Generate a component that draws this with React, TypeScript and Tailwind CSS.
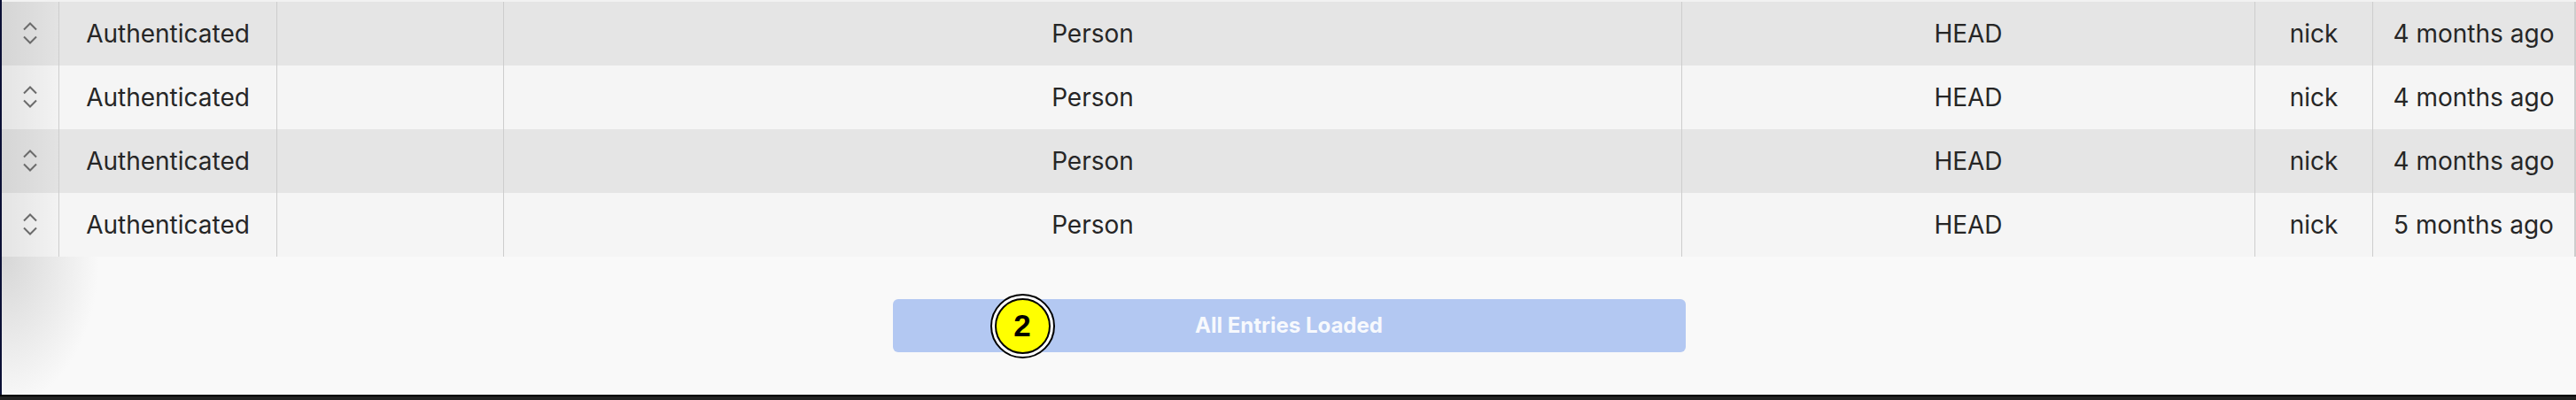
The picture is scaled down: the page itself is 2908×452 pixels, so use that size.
import React from "react"

const rows = [
  { role: "Authenticated", type: "Person", method: "HEAD", user: "nick", when: "4 months ago" },
  { role: "Authenticated", type: "Person", method: "HEAD", user: "nick", when: "4 months ago" },
  { role: "Authenticated", type: "Person", method: "HEAD", user: "nick", when: "4 months ago" },
  { role: "Authenticated", type: "Person", method: "HEAD", user: "nick", when: "5 months ago" },
]

const SortIcon = () => (
  <svg width="16" height="26" viewBox="0 0 16 26" fill="none" stroke="#6b6b6b" strokeWidth={2}>
    <path d="M1 8.5L8 1.5L15 8.5" />
    <path d="M1 16.5L8 23.5L15 16.5" />
  </svg>
)

const cell = "flex items-center justify-center border-r border-[#cdcdcd] overflow-hidden whitespace-nowrap"

const App = () => {
  return (
    <div className="flex h-[452px] w-[2908px] flex-col" style={{ fontFamily: "Inter, 'Liberation Sans', sans-serif" }}>
      <div className="flex h-[446px]">
        <div className="w-[2px] bg-[#0b1035]" />
        <div className="flex flex-1 flex-col">
          <div className="h-[2px] bg-[#f2f2f2]" />
          {rows.map((r, i) => (
            <div
              key={i}
              className={
                "grid h-[72px] grid-cols-[65px_246px_256px_1330px_647px_133px_1fr] text-[28px] text-[#262626] " +
                (i % 2 === 0 ? "bg-[#e5e5e5]" : "bg-[#f5f5f5]")
              }
            >
              <div className={cell + " bg-[linear-gradient(to_right,rgba(0,0,0,0.07),rgba(0,0,0,0.01))]"}>
                <SortIcon />
              </div>
              <div className={cell}>{r.role}</div>
              <div className={cell}></div>
              <div className={cell}>{r.type}</div>
              <div className={cell}>{r.method}</div>
              <div className={cell}>{r.user}</div>
              <div className={cell + " border-r-2"}>{r.when}</div>
            </div>
          ))}
          <div className="flex flex-1 justify-center bg-[#f9f9f9] bg-[radial-gradient(110px_170px_at_0_0,#d6d6d6,#f9f9f9)] pt-[48px]">
            <div className="relative">
              <button className="flex h-[60px] w-[895px] items-center justify-center rounded-[6px] bg-[#b3c8f2] text-[24px] font-bold text-[#f7f9fd]">
                All Entries Loaded
              </button>
              <div className="absolute left-[110px] top-[-6px] flex h-[73px] w-[73px] items-center justify-center rounded-full border-2 border-black bg-white p-[3px]">
                <div
                  className="flex h-full w-full items-center justify-center rounded-full border-2 border-black bg-[#ffff00] text-[35px] font-bold text-black"
                  style={{ fontFamily: "'Liberation Sans', Arial, sans-serif" }}
                >
                  2
                </div>
              </div>
            </div>
          </div>
        </div>
      </div>
      <div className="h-[2px] bg-black" />
      <div className="h-[4px] bg-[#222222]" />
    </div>
  )
}

export default App
